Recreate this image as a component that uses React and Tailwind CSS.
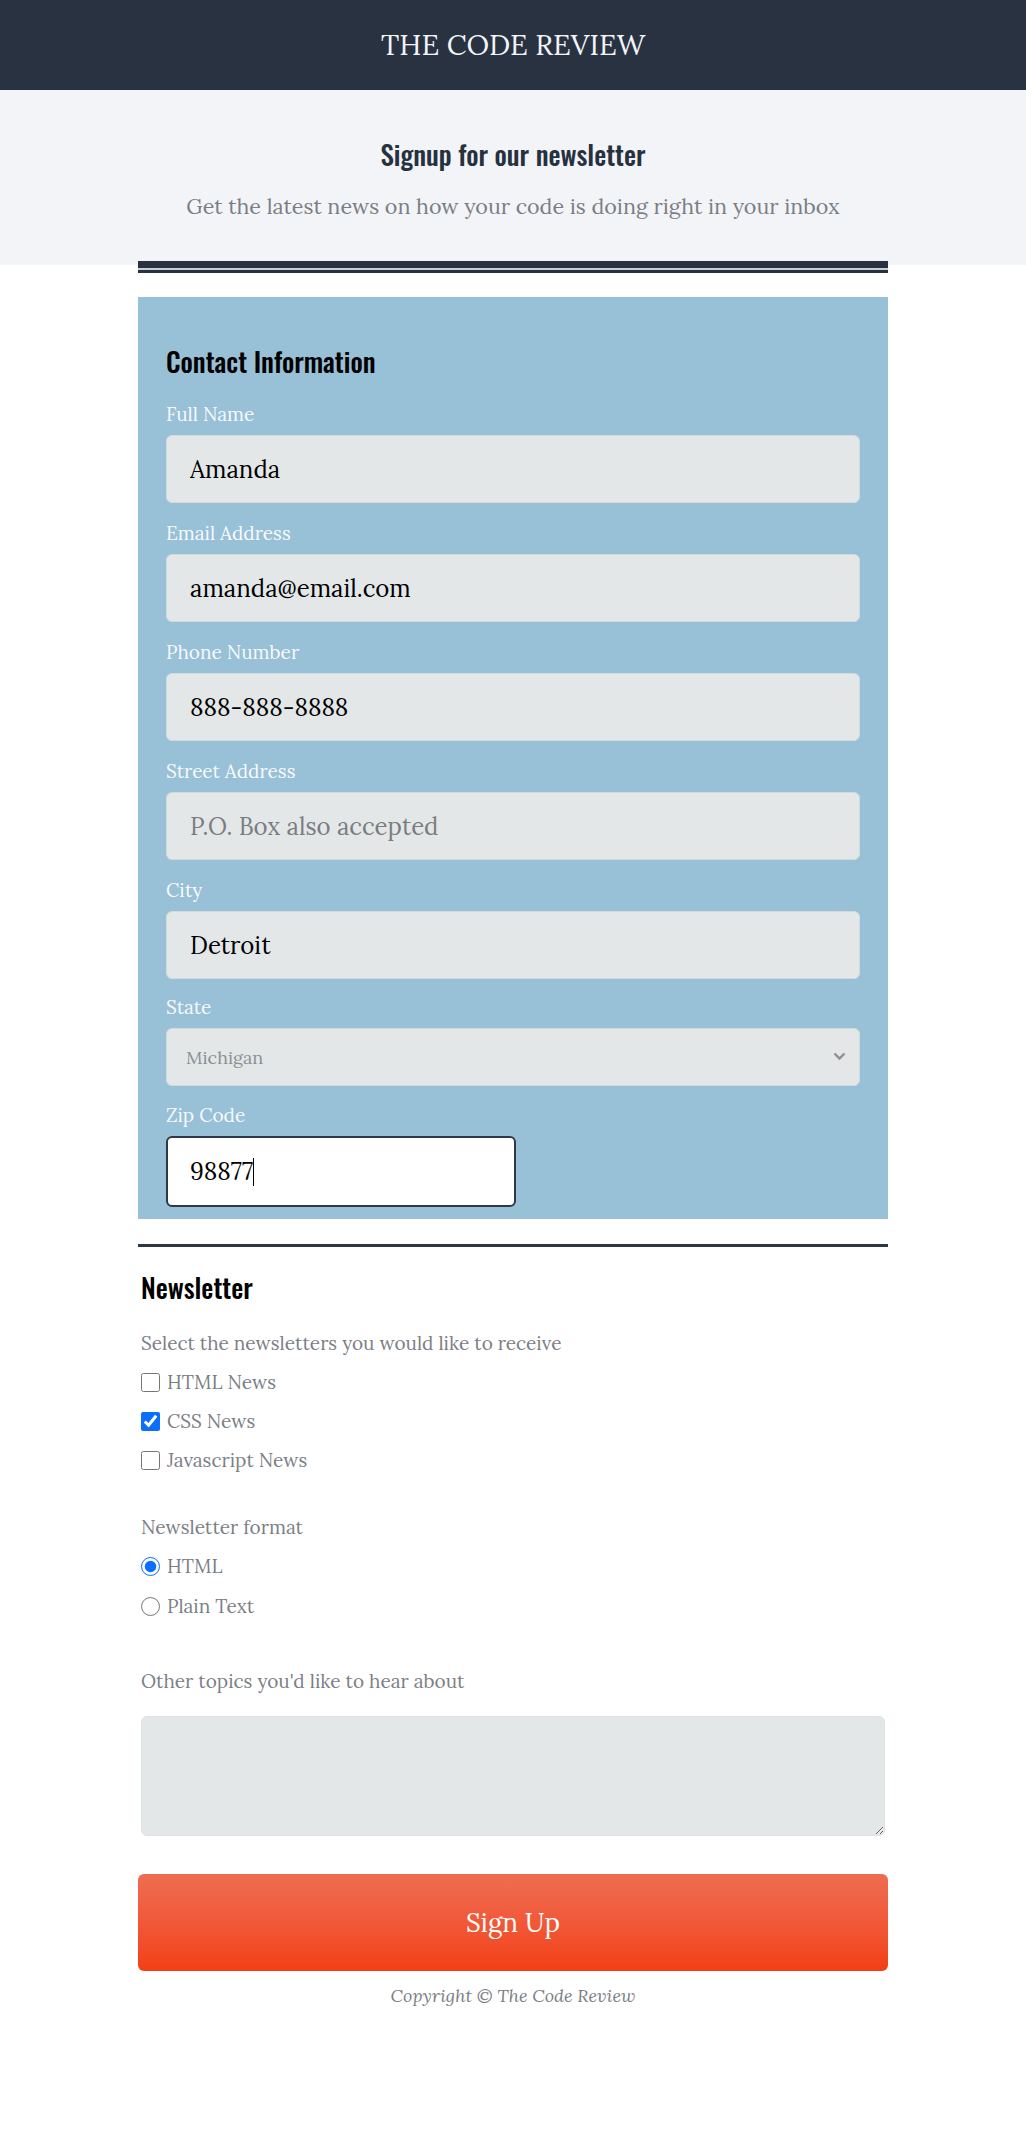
import React from "react";

const serif = "font-['Lora','DejaVu_Serif','Liberation_Serif',serif]";
const cond = "font-['Oswald','DejaVu_Sans_Condensed','Liberation_Sans_Narrow','Roboto_Condensed',sans-serif]";

function Field({ label, value, placeholder }) {
  return (
    <div className="mt-[19px] first:mt-0">
      <label className={`block text-[19px] leading-[22px] mb-[10px] text-[#f7fafc] ${serif}`}>{label}</label>
      <input
        readOnly
        value={value || ""}
        placeholder={placeholder}
        className={`block w-full h-[68px] rounded-[6px] bg-[#e3e7e8] border border-[#d3dadd] px-[23px] text-[24px] text-black placeholder:text-[#7a7d80] outline-none ${serif}`}
      />
    </div>
  );
}

function Check({ label, checked }) {
  return (
    <label className={`flex items-center h-[20px] text-[19px] text-[#7c7f86] ${serif}`}>
      <input type="checkbox" defaultChecked={checked} className="w-[19px] h-[19px] m-0 mr-[7px] accent-[#0b6efd]" />
      {label}
    </label>
  );
}

function Radio({ label, checked }) {
  return (
    <label className={`flex items-center h-[20px] text-[19px] text-[#7c7f86] ${serif}`}>
      <input type="radio" name="fmt" defaultChecked={checked} className="w-[19px] h-[19px] m-0 mr-[7px] accent-[#0b6efd]" />
      {label}
    </label>
  );
}

export default function App() {
  return (
    <div className="bg-white min-h-[2154px] w-full">
      <header className="h-[90px] bg-[#283241] flex items-center justify-center">
        <h1 className={`text-[28.5px] text-[#f3f4f8] ${serif}`}>THE CODE REVIEW</h1>
      </header>
      <section className="h-[175px] bg-[#f2f4f7] flex flex-col items-center pt-[47px]">
        <h2 className={`text-[27px] leading-[34px] font-medium text-[#263140] ${cond}`}>Signup for our newsletter</h2>
        <p className={`mt-[21px] text-[21.5px] leading-[28px] text-[#7b7e85] ${serif}`}>
          Get the latest news on how your code is doing right in your inbox
        </p>
      </section>
      <main className="w-[750px] mx-auto">
        <div className="-mt-[4px] h-[12px] border-t-[7px] border-b-[3px] border-[#283241] bg-[#c9ced5]" />
        <div className="mt-[24px] bg-[#98c0d7] pt-[46px] pb-[12px] px-[28px]">
          <h3 className={`text-[27px] leading-[36px] font-medium text-black mb-[24px] ${cond}`}>Contact Information</h3>
          <Field label="Full Name" value="Amanda" />
          <Field label="Email Address" value="amanda@email.com" />
          <Field label="Phone Number" value="888-888-8888" />
          <Field label="Street Address" placeholder="P.O. Box also accepted" />
          <Field label="City" value="Detroit" />
          <div className="mt-[17px]">
            <label className={`block text-[19px] leading-[22px] mb-[10px] text-[#f7fafc] ${serif}`}>State</label>
            <div className="relative">
              <select
                defaultValue="MI"
                className={`block w-full h-[58px] appearance-none rounded-[6px] bg-[#e3e7e8] border border-[#d3dadd] px-[19px] text-[18px] text-[#8c8f93] outline-none ${serif}`}
              >
                <option value="MI">Michigan</option>
              </select>
              <svg className="absolute right-[14px] top-[24px] w-[13px] h-[9px] pointer-events-none" viewBox="0 0 13 9">
                <path d="M1.5 1.5 L6.5 6.5 L11.5 1.5" fill="none" stroke="#8f8f8f" strokeWidth="2.4" />
              </svg>
            </div>
          </div>
          <div className="mt-[18px]">
            <label className={`block text-[19px] leading-[22px] mb-[10px] text-[#f7fafc] ${serif}`}>Zip Code</label>
            <div className={`w-[350px] h-[71px] rounded-[6px] bg-white border-2 border-[#2f3846] flex items-center px-[22px] text-[24px] text-black ${serif}`}>
              <span>98877</span>
              <span className="inline-block w-[1px] h-[28px] bg-black" />
            </div>
          </div>
        </div>

        <div className="mt-[25px] border-t-[3px] border-[#2d3644] px-[3px]">
          <h3 className={`mt-[22px] text-[27px] leading-[36px] font-medium text-black ${cond}`}>Newsletter</h3>
          <p className={`mt-[26px] text-[19px] leading-[24px] text-[#7c7f86] ${serif}`}>Select the newsletters you would like to receive</p>
          <div className="mt-[17px] flex flex-col gap-[19px]">
            <Check label="HTML News" />
            <Check label="CSS News" checked />
            <Check label="Javascript News" />
          </div>
          <p className={`mt-[45px] text-[19px] leading-[24px] text-[#7c7f86] ${serif}`}>Newsletter format</p>
          <div className="mt-[17px] flex flex-col gap-[20px]">
            <Radio label="HTML" checked />
            <Radio label="Plain Text" />
          </div>
          <p className={`mt-[53px] text-[19px] leading-[24px] text-[#7c7f86] ${serif}`}>Other topics you'd like to hear about</p>
          <textarea className="mt-[23px] block w-full h-[120px] rounded-[6px] bg-[#e3e7e8] border border-[#dfe3e5] outline-none" />
        </div>
        <button className={`mt-[38px] w-full h-[97px] rounded-[6px] bg-gradient-to-b from-[#ee6d51] to-[#f33e12] text-white text-[26px] ${serif}`}>
          Sign Up
        </button>
        <p className={`mt-[13px] text-center italic text-[18px] leading-[24px] text-[#7c7f86] ${serif}`}>Copyright © The Code Review</p>
      </main>
    </div>
  );
}
